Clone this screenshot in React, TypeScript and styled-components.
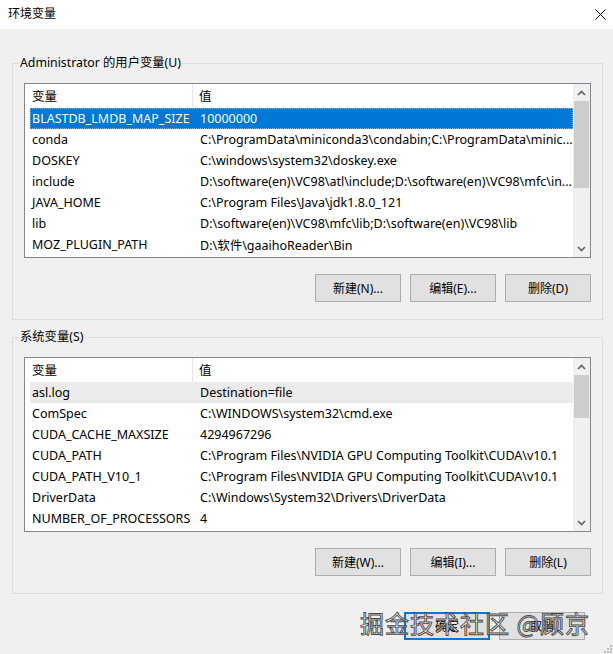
import styled, { createGlobalStyle } from 'styled-components';

interface EnvVar {
  name: string;
  value: string;
}

const userVars: EnvVar[] = [
  { name: 'BLASTDB_LMDB_MAP_SIZE', value: '10000000' },
  { name: 'conda', value: 'C:\\ProgramData\\miniconda3\\condabin;C:\\ProgramData\\minic...' },
  { name: 'DOSKEY', value: 'C:\\windows\\system32\\doskey.exe' },
  { name: 'include', value: 'D:\\software(en)\\VC98\\atl\\include;D:\\software(en)\\VC98\\mfc\\in...' },
  { name: 'JAVA_HOME', value: 'C:\\Program Files\\Java\\jdk1.8.0_121' },
  { name: 'lib', value: 'D:\\software(en)\\VC98\\mfc\\lib;D:\\software(en)\\VC98\\lib' },
  { name: 'MOZ_PLUGIN_PATH', value: 'D:\\软件\\gaaihoReader\\Bin' },
];

const systemVars: EnvVar[] = [
  { name: 'asl.log', value: 'Destination=file' },
  { name: 'ComSpec', value: 'C:\\WINDOWS\\system32\\cmd.exe' },
  { name: 'CUDA_CACHE_MAXSIZE', value: '4294967296' },
  { name: 'CUDA_PATH', value: 'C:\\Program Files\\NVIDIA GPU Computing Toolkit\\CUDA\\v10.1' },
  { name: 'CUDA_PATH_V10_1', value: 'C:\\Program Files\\NVIDIA GPU Computing Toolkit\\CUDA\\v10.1' },
  { name: 'DriverData', value: 'C:\\Windows\\System32\\Drivers\\DriverData' },
  { name: 'NUMBER_OF_PROCESSORS', value: '4' },
];

const GlobalStyle = createGlobalStyle`
  html, body {
    margin: 0;
    padding: 0;
    background: #f0f0f0;
  }
  body {
    font-family: "Noto Sans", "Noto Sans CJK SC", sans-serif;
    font-size: 12px;
    color: #000;
  }
`;

const Window = styled.div`
  position: relative;
  width: 613px;
  height: 654px;
  background: #f0f0f0;
  display: flex;
  flex-direction: column;
  overflow: hidden;
`;

const TitleBar = styled.div`
  height: 29px;
  background: #fff;
  display: flex;
  align-items: center;
  justify-content: space-between;
  padding: 0 7px 1px 8px;
  box-sizing: border-box;
`;

const Title = styled.span`
  font-size: 12px;
  line-height: 16px;
`;

const CloseButton = styled.div`
  width: 11px;
  height: 11px;
  display: flex;
`;

const Content = styled.div`
  padding: 34px 10px 0 12px;
  display: flex;
  flex-direction: column;
  gap: 17px;
`;

const GroupBox = styled.div`
  position: relative;
  border: 1px solid #dcdcdc;
  padding: 19px 11px 17px 11px;
  display: flex;
  flex-direction: column;
  gap: 16px;
`;

const GroupLabel = styled.span`
  position: absolute;
  top: -9px;
  left: 6px;
  padding: 0 2px 0 1px;
  background: #f0f0f0;
  line-height: 16px;
  font-size: 12.3px;
`;

const ListView = styled.div`
  height: 175px;
  box-sizing: border-box;
  border: 1px solid #828790;
  background: #fff;
  display: grid;
  grid-template-columns: 1fr 17px;
  overflow: hidden;
  font-size: 12.5px;
`;

const Table = styled.div`
  display: flex;
  flex-direction: column;
  min-width: 0;
`;

const HeaderRow = styled.div`
  height: 24px;
  display: grid;
  grid-template-columns: 168px 1fr;
  align-items: stretch;
`;

const HeaderCell = styled.div<{ $divider?: boolean }>`
  display: flex;
  align-items: center;
  padding-left: ${p => (p.$divider ? '7px' : '6px')};
  padding-bottom: 2px;
  border-right: ${p => (p.$divider ? '1px solid #e5e5e5' : 'none')};
`;

const Row = styled.div<{ $state?: 'active' | 'inactive' }>`
  height: 21px;
  margin-left: 5px;
  box-sizing: border-box;
  display: grid;
  grid-template-columns: 168px 1fr;
  align-items: center;
  background: ${p =>
    p.$state === 'active' ? '#0078d7' : p.$state === 'inactive' ? '#ebebeb' : 'transparent'};
  color: ${p => (p.$state === 'active' ? '#fff' : '#000')};
  outline: ${p => (p.$state === 'active' ? '1px dotted #7fb8e8' : 'none')};
  outline-offset: -1px;
`;

const Cell = styled.span`
  padding-left: 2px;
  white-space: nowrap;
  overflow: hidden;
`;

const ScrollBar = styled.div`
  background: #f0f0f0;
  display: flex;
  flex-direction: column;
`;

const ArrowButton = styled.div`
  height: 17px;
  display: flex;
  align-items: center;
  justify-content: center;
`;

const Track = styled.div`
  flex: 1;
  display: flex;
  flex-direction: column;
`;

const Thumb = styled.div`
  margin: 0 1px;
  background: #cdcdcd;
`;

const ButtonRow = styled.div`
  display: flex;
  justify-content: flex-end;
  gap: 9px;
`;

const Button = styled.button<{ $default?: boolean }>`
  width: 86px;
  height: 28px;
  box-sizing: border-box;
  margin: 0;
  padding: 0 0 1px;
  font-family: "Noto Sans", "Noto Sans CJK SC", sans-serif;
  font-size: 12px;
  color: #000;
  background: #e1e1e1;
  border: ${p => (p.$default ? '2px solid #0078d7' : '1px solid #adadad')};
  border-radius: 0;
`;

const Footer = styled.div`
  display: flex;
  justify-content: flex-end;
  gap: 9px;
  padding: 18px 28px 0 0;
`;

const Watermark = styled.div`
  position: absolute;
  left: 360px;
  top: 606px;
  font-family: "Noto Sans CJK SC", sans-serif;
  font-size: 24px;
  line-height: 34px;
  letter-spacing: 1px;
  color: rgba(255, 255, 255, 0.5);
  -webkit-text-stroke: 0.9px #484848;
  white-space: nowrap;
  pointer-events: none;
`;

const Grip = styled.div`
  position: absolute;
  right: 1px;
  bottom: 1px;
  width: 8px;
  height: 8px;
  display: flex;
`;

function Chevron({ up }: { up?: boolean }) {
  return (
    <svg width="9" height="6" viewBox="0 0 9 6">
      <path
        d={up ? 'M1 5 L4.5 1.5 L8 5' : 'M1 1 L4.5 4.5 L8 1'}
        fill="none"
        stroke="#606060"
        strokeWidth="1.6"
      />
    </svg>
  );
}

interface VarListProps {
  vars: EnvVar[];
  selection: 'active' | 'inactive';
  thumbHeight: number;
}

function VarList({ vars, selection, thumbHeight }: VarListProps) {
  return (
    <ListView>
      <Table>
        <HeaderRow>
          <HeaderCell $divider>变量</HeaderCell>
          <HeaderCell>值</HeaderCell>
        </HeaderRow>
        {vars.map((v, i) => (
          <Row key={v.name} $state={i === 0 ? selection : undefined}>
            <Cell>{v.name}</Cell>
            <Cell>{v.value}</Cell>
          </Row>
        ))}
      </Table>
      <ScrollBar>
        <ArrowButton>
          <Chevron up />
        </ArrowButton>
        <Track>
          <Thumb style={{ height: thumbHeight }} />
        </Track>
        <ArrowButton>
          <Chevron />
        </ArrowButton>
      </ScrollBar>
    </ListView>
  );
}

export default function App() {
  return (
    <>
      <GlobalStyle />
      <Window>
        <TitleBar>
          <Title>环境变量</Title>
          <CloseButton>
            <svg width="11" height="11" viewBox="0 0 11 11">
              <path d="M0.5 0.5 L10.5 10.5 M10.5 0.5 L0.5 10.5" stroke="#000" strokeWidth="1" />
            </svg>
          </CloseButton>
        </TitleBar>

        <Content>
          <GroupBox>
            <GroupLabel>Administrator 的用户变量(U)</GroupLabel>
            <VarList vars={userVars} selection="active" thumbHeight={87} />
            <ButtonRow>
              <Button>新建(N)...</Button>
              <Button>编辑(E)...</Button>
              <Button>删除(D)</Button>
            </ButtonRow>
          </GroupBox>

          <GroupBox>
            <GroupLabel>系统变量(S)</GroupLabel>
            <VarList vars={systemVars} selection="inactive" thumbHeight={43} />
            <ButtonRow>
              <Button>新建(W)...</Button>
              <Button>编辑(I)...</Button>
              <Button>删除(L)</Button>
            </ButtonRow>
          </GroupBox>
        </Content>

        <Footer>
          <Button $default>确定</Button>
          <Button>取消</Button>
        </Footer>

        <Watermark>掘金技术社区 @顾京</Watermark>

        <Grip>
          <svg width="8" height="8" viewBox="0 0 8 8">
            <rect x="6" y="0" width="2" height="2" fill="#bdbdbd" />
            <rect x="3" y="3" width="2" height="2" fill="#bdbdbd" />
            <rect x="6" y="3" width="2" height="2" fill="#bdbdbd" />
            <rect x="0" y="6" width="2" height="2" fill="#bdbdbd" />
            <rect x="3" y="6" width="2" height="2" fill="#bdbdbd" />
            <rect x="6" y="6" width="2" height="2" fill="#bdbdbd" />
          </svg>
        </Grip>
      </Window>
    </>
  );
}
